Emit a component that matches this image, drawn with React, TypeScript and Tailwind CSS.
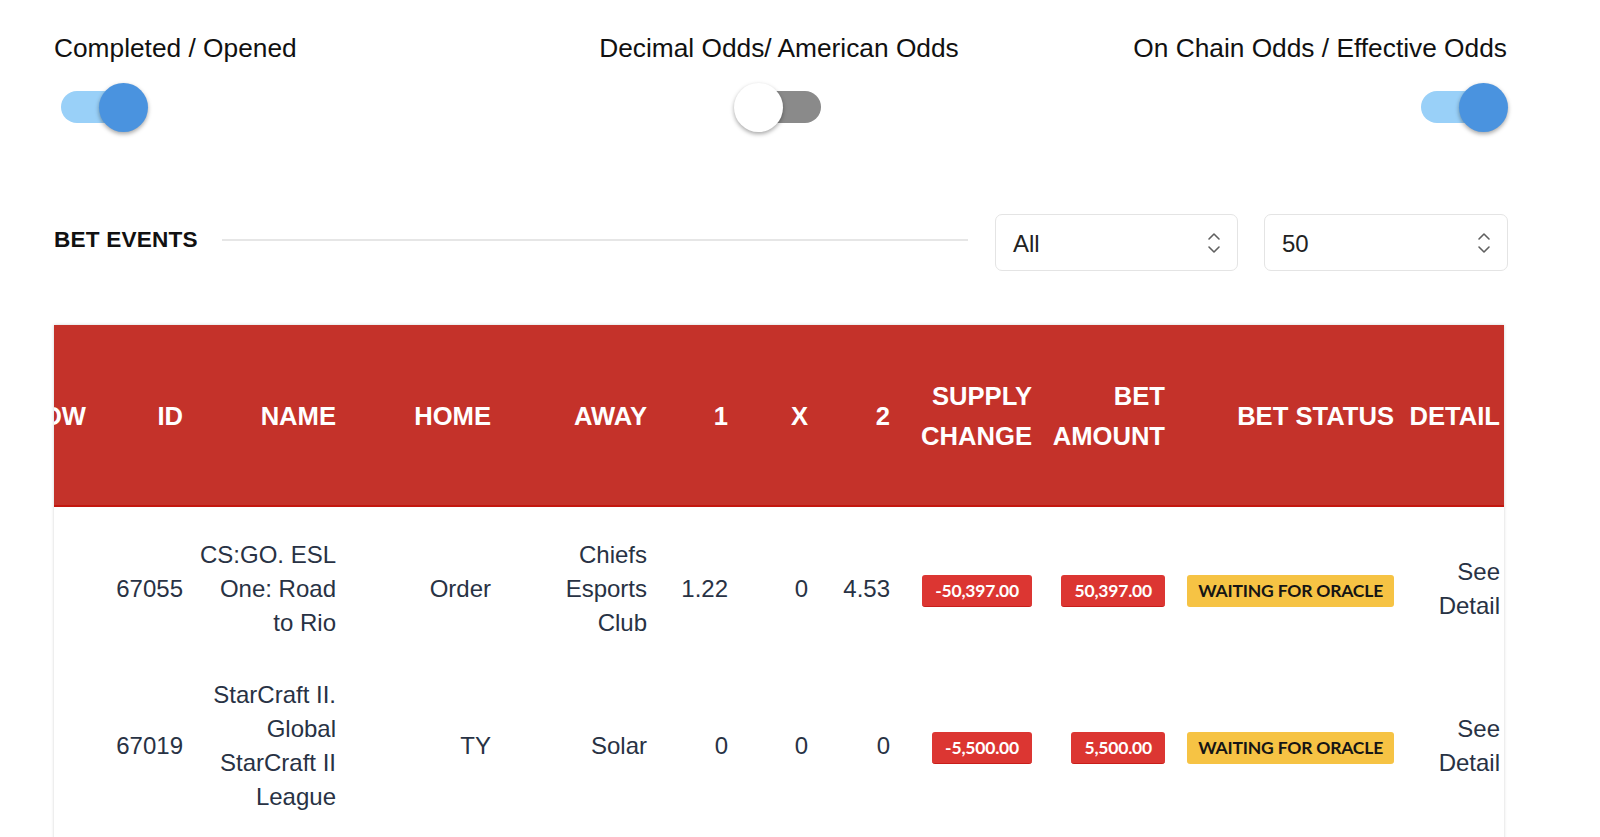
import React from "react";

const SANS = { fontFamily: '"Liberation Sans", Arial, sans-serif' };
const LATO = { fontFamily: 'Lato, "Liberation Sans", sans-serif' };

function Toggle({ on, className = "" }: { on: boolean; className?: string }) {
  return (
    <div
      className={
        "relative w-[80px] h-[32px] rounded-full " +
        (on ? "bg-[#99d0f8] " : "bg-[#8a8a8a] ") +
        className
      }
    >
      <div
        className={
          "absolute top-[-8px] w-[49px] h-[49px] rounded-full shadow-[0_2px_4px_rgba(0,0,0,0.35)] " +
          (on ? "right-[-7px] bg-[#4a93df]" : "left-[-7px] bg-white")
        }
      />
    </div>
  );
}

function UpDown() {
  return (
    <svg width="14" height="26" viewBox="0 0 14 26" fill="none" stroke="#606060" strokeWidth="1.6" strokeLinecap="round" strokeLinejoin="round">
      <path d="M2 9 L7 4 L12 9" />
      <path d="M2 17 L7 22 L12 17" />
    </svg>
  );
}

function SelectBox({ value, className = "" }: { value: string; className?: string }) {
  return (
    <div
      className={
        "h-[57px] border-[1.5px] border-[#e4e4e4] rounded-[7px] bg-white flex items-center justify-between pl-[17px] pr-[16px] " +
        className
      }
    >
      <span className="text-[24px] text-[#222] mt-[2px]" style={SANS}>
        {value}
      </span>
      <UpDown />
    </div>
  );
}

function Badge({ text, yellow = false }: { text: string; yellow?: boolean }) {
  return (
    <span
      className={
        "inline-block h-[32px] leading-[32px] rounded-[3px] text-[17.5px] font-bold tracking-[-0.2px] " +
        (yellow
          ? "bg-[#f6c344] text-[#151515] px-[11px]"
          : "bg-[#dc3632] text-white border-b border-[#c81e1a] px-[13px]")
      }
      style={LATO}
    >
      {text}
    </span>
  );
}

const cols = [90, 97, 153, 155, 156, 81, 80, 82, 142, 133, 229, 110];

type Row = {
  id: string;
  name: string[];
  home: string;
  away: string[];
  o1: string;
  ox: string;
  o2: string;
  supply: string;
  bet: string;
  first?: boolean;
};

const rows: Row[] = [
  {
    id: "67055",
    name: ["CS:GO. ESL", "One: Road", "to Rio"],
    home: "Order",
    away: ["Chiefs", "Esports", "Club"],
    o1: "1.22",
    ox: "0",
    o2: "4.53",
    supply: "-50,397.00",
    bet: "50,397.00",
    first: true,
  },
  {
    id: "67019",
    name: ["StarCraft II.", "Global", "StarCraft II", "League"],
    home: "TY",
    away: ["Solar"],
    o1: "0",
    ox: "0",
    o2: "0",
    supply: "-5,500.00",
    bet: "5,500.00",
  },
];

function Lines({ lines }: { lines: string[] }) {
  return (
    <>
      {lines.map((l, i) => (
        <span key={i} className="block whitespace-nowrap">
          {l}
        </span>
      ))}
    </>
  );
}

export default function App() {
  const headers: React.ReactNode[] = [
    "ROW",
    "ID",
    "NAME",
    "HOME",
    "AWAY",
    "1",
    "X",
    "2",
    <Lines lines={["SUPPLY", "CHANGE"]} />,
    <Lines lines={["BET", "AMOUNT"]} />,
    "BET STATUS",
    "DETAIL",
  ];

  return (
    <div className="bg-white min-h-screen w-full overflow-hidden" style={SANS}>
      <div className="ml-[54px] w-[1454px] pt-[33px]">
        {/* toggles row */}
        <div className="grid grid-cols-3">
          <div className="flex flex-col items-start">
            <div className="text-[26.3px] leading-[30px] text-[#111]">Completed / Opened</div>
            <Toggle on className="mt-[28px] ml-[7px]" />
          </div>
          <div className="flex flex-col items-center">
            <div className="text-[26.3px] leading-[30px] text-[#111] mr-[4px]">Decimal Odds/ American Odds</div>
            <Toggle on={false} className="mt-[28px]" />
          </div>
          <div className="flex flex-col items-end">
            <div className="text-[26.3px] leading-[30px] text-[#111] mr-[1px]">On Chain Odds / Effective Odds</div>
            <Toggle on className="mt-[28px] mr-[7px]" />
          </div>
        </div>

        {/* bet events row */}
        <div className="flex items-center mt-[91px]">
          <div className="text-[22.6px] font-bold text-[#111] tracking-[0.2px] mt-[-5px]">BET EVENTS</div>
          <div className="flex-1 h-[2px] bg-[#e6e6e6] ml-[24px] mr-[27px] mt-[-6px]" />
          <SelectBox value="All" className="w-[243px]" />
          <SelectBox value="50" className="w-[244px] ml-[26px]" />
        </div>

        {/* table */}
        <div className="mt-[54px] w-[1450px] overflow-hidden shadow-[0_0_3px_rgba(0,0,0,0.18)] pb-[120px]">
          <table className="table-fixed border-collapse ml-[-58px] w-[1508px]">
            <colgroup>
              {cols.map((w, i) => (
                <col key={i} style={{ width: w }} />
              ))}
            </colgroup>
            <thead>
              <tr className="bg-[#c4322a] border-b-2 border-[#c3170f]">
                {headers.map((h, i) => (
                  <th
                    key={i}
                    className={
                      "h-[181px] pt-[1px] align-middle text-right text-white font-bold text-[25.6px] leading-[40px] whitespace-nowrap " +
                      (i === headers.length - 1 ? "pr-[4px]" : "")
                    }
                  >
                    {h}
                  </th>
                ))}
              </tr>
            </thead>
            <tbody className="text-[24px] leading-[34px] text-[#283244]">
              {rows.map((r, ri) => {
                const pad = r.first ? "pt-[31px] pb-[19px]" : "py-[19px]";
                const td = "align-middle text-right whitespace-nowrap " + pad;
                return (
                  <tr key={ri}>
                    <td className={td}></td>
                    <td className={td}>{r.id}</td>
                    <td className={td}>
                      <Lines lines={r.name} />
                    </td>
                    <td className={td}>{r.home}</td>
                    <td className={td}>
                      <Lines lines={r.away} />
                    </td>
                    <td className={td}>{r.o1}</td>
                    <td className={td}>{r.ox}</td>
                    <td className={td}>{r.o2}</td>
                    <td className={td}>
                      <Badge text={r.supply} />
                    </td>
                    <td className={td}>
                      <Badge text={r.bet} />
                    </td>
                    <td className={td}>
                      <Badge text="WAITING FOR ORACLE" yellow />
                    </td>
                    <td className={td + " pr-[4px]"}>
                      <Lines lines={["See", "Detail"]} />
                    </td>
                  </tr>
                );
              })}
            </tbody>
          </table>
        </div>
      </div>
    </div>
  );
}
